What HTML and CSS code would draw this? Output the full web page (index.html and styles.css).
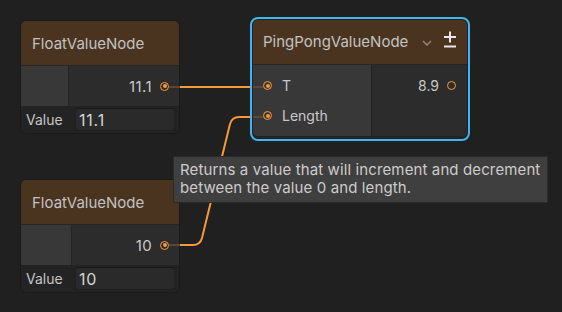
FILE: index.html
```html
<!DOCTYPE html>
<html lang="en">
<head>
    <meta charset="UTF-8">
    <title>Node Graph</title>
    <link rel="stylesheet" href="styles.css">
</head>
<body>
    <div class="graph">
        <!-- First value node -->
        <div class="node float-a">
            <div class="node-title">FloatValueNode</div>
            <div class="node-ports">
                <div class="inputs in-a"></div>
                <div class="outputs">
                    <div class="port out-port"><span>11.1</span><i class="dot filled"></i></div>
                </div>
            </div>
            <div class="node-ext">
                <label>Value</label>
                <div class="field">11.1</div>
            </div>
        </div>

        <!-- Second value node -->
        <div class="node float-b">
            <div class="node-title">FloatValueNode</div>
            <div class="node-ports">
                <div class="inputs in-b"></div>
                <div class="outputs">
                    <div class="port out-port"><span>10</span><i class="dot filled"></i></div>
                </div>
            </div>
            <div class="node-ext">
                <label>Value</label>
                <div class="field">10</div>
            </div>
        </div>

        <!-- Selected ping pong node -->
        <div class="node pingpong selected">
            <div class="node-title">
                <span>PingPongValueNode</span>
                <svg class="chevron" width="10" height="6" viewBox="0 0 10 6"><path d="M1 1 L5 5 L9 1" fill="none" stroke="#9a8a7a" stroke-width="1.4"/></svg>
                <svg class="plusminus" width="14" height="17" viewBox="0 0 14 17">
                    <path d="M1 6 H13 M7 0.5 V11.5 M1 15.5 H13" stroke="#e8e8e8" stroke-width="2" fill="none"/>
                </svg>
            </div>
            <div class="node-ports">
                <div class="inputs in-c">
                    <div class="port in-port"><i class="dot filled"></i><span>T</span></div>
                    <div class="port in-port"><i class="dot filled"></i><span>Length</span></div>
                </div>
                <div class="outputs out-c">
                    <div class="port out-port"><span>8.9</span><i class="dot"></i></div>
                </div>
            </div>
        </div>

        <svg class="wires" width="562" height="312" viewBox="0 0 562 312">
            <g stroke="#5c4634" stroke-width="2" fill="none">
                <path d="M169 87 H180"/>
                <path d="M253 87 H263"/>
                <path d="M169 245 H180"/>
                <path d="M253 117 H263"/>
            </g>
            <g stroke="#f7983a" stroke-width="2" fill="none">
                <path d="M180 87 H250"/>
                <path d="M180 245 H193 Q200 245 202 238 L230 124 Q232 117 239 117 H250"/>
            </g>
        </svg>

        <div class="tooltip">Returns a value that will increment and decrement<br>between the value 0 and length.</div>
    </div>
</body>
</html>
```

FILE: styles.css
```css
/* Page */
body {
  margin: 0;
  background-color: #202020;
  font-family: "Inter", "Noto Sans", sans-serif;
}

.graph {
  position: relative;
  width: 562px;
  height: 312px;
  overflow: hidden;
}

/* Node Styling */
.node {
  position: absolute;
  width: 160px;
  display: flex;
  flex-direction: column;
  background-color: #232323;
  border: 1px solid #1a1a1a;
  border-radius: 6px;
  overflow: hidden;
  box-sizing: border-box;
}

.float-a {
  left: 20px;
  top: 20px;
}

.float-b {
  left: 20px;
  top: 179px;
}

.pingpong {
  left: 250px;
  top: 17px;
  width: 220px;
  height: 124px;
}

.selected {
  border: 2px solid #40b5ef;
  border-radius: 8px;
  padding: 1px;
  background-color: #232323;
}

/* Title bar */
.node-title {
  height: 44px;
  display: flex;
  align-items: center;
  padding-left: 11px;
  background-color: #4a3420;
  border-bottom: 1px solid #262626;
  color: #c2c2c2;
  font-size: 15px;
}

.pingpong .node-title {
  padding-left: 10px;
  border-radius: 5px 5px 0 0;
}

.chevron {
  margin-left: 14px;
  margin-top: 3px;
}

.plusminus {
  margin-left: 11px;
  margin-top: -5px;
}

/* Port rows */
.node-ports {
  display: flex;
  height: 40px;
}

.pingpong .node-ports {
  height: 72px;
  border-bottom: 2px solid #242424;
  border-radius: 0 0 5px 5px;
  overflow: hidden;
}

.inputs {
  background-color: #383838;
  border-right: 1px solid #242424;
}

.in-a {
  width: 47px;
}

.in-b {
  width: 50px;
}

.in-c {
  width: 118px;
  padding-top: 6px;
}

.outputs {
  flex: 1;
  background-color: #2c2c2c;
  display: flex;
  flex-direction: column;
  justify-content: center;
}

.out-c {
  justify-content: flex-start;
  padding-top: 6px;
}

.port {
  display: flex;
  align-items: center;
  height: 30px;
  color: #c8c8c8;
  font-size: 14px;
}

.out-port {
  justify-content: flex-end;
  gap: 8px;
  padding-right: 10px;
}

.float-a .out-port,
.float-b .out-port {
  font-size: 15px;
  letter-spacing: 0.4px;
}

.pingpong .out-port {
  padding-right: 11px;
}

.in-port {
  gap: 10px;
  padding-left: 10px;
}

/* Port dot */
.dot {
  width: 7px;
  height: 7px;
  border: 1.5px solid #f7983a;
  border-radius: 50%;
  position: relative;
}

.dot.filled::after {
  content: "";
  position: absolute;
  left: 1.5px;
  top: 1.5px;
  width: 4px;
  height: 4px;
  border-radius: 50%;
  background-color: #f7983a;
}

/* Extension row */
.node-ext {
  height: 27px;
  display: flex;
  align-items: center;
  padding: 0 4px 0 5px;
  background-color: #232323;
}

.node-ext label {
  width: 49px;
  color: #c4c4c4;
  font-size: 14px;
}

.field {
  flex: 1;
  height: 21px;
  display: flex;
  align-items: center;
  padding-left: 3px;
  background-color: #2a2a2a;
  border: 1px solid #212121;
  border-top-color: #1a1a1a;
  border-radius: 3px;
  color: #d4d4d4;
  font-size: 16px;
  letter-spacing: 0.8px;
}

/* Wires */
.wires {
  position: absolute;
  left: 0;
  top: 0;
  pointer-events: none;
}

/* Tooltip */
.tooltip {
  position: absolute;
  left: 173px;
  top: 156px;
  width: 375px;
  height: 47px;
  box-sizing: border-box;
  padding: 4px 6px;
  background-color: #3f3f3f;
  border: 1px solid #2a2a2a;
  color: #cccccc;
  font-size: 15px;
  letter-spacing: 0.12px;
  line-height: 18px;
  white-space: nowrap;
}
```
